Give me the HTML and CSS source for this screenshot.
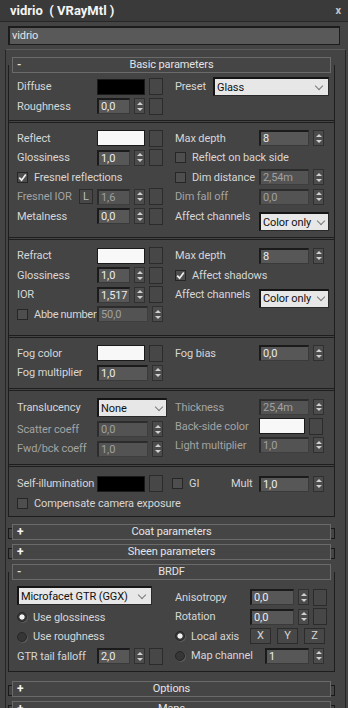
FILE: index.html
```html
<!DOCTYPE html>
<html lang="en">
<head>
    <meta charset="UTF-8">
    <title>vidrio ( VRayMtl )</title>
    <link rel="stylesheet" href="styles.css">
</head>
<body>
    <div class="titlebar">
        <span class="title">vidrio  ( VRayMtl )</span>
        <span class="close">x</span>
    </div>
    <div class="namebar"><div class="namefield">vidrio</div></div>

    <div class="panel">
        <!-- Basic parameters -->
        <section class="rollout open basic">
            <div class="rhead"><span class="sign">-</span><span>Basic parameters</span><span></span></div>

            <div class="group g1">
                <div class="col left">
                    <div class="row"><span class="lab">Diffuse</span><span class="sw black"></span><span class="map"></span></div>
                    <div class="row"><span class="lab">Roughness</span><span class="fld w33">0,0</span><span class="spin"></span><span class="map"></span></div>
                </div>
                <div class="col right">
                    <div class="row"><span class="lab w38">Preset</span><span class="dd w116">Glass</span></div>
                </div>
            </div>

            <div class="group g2">
                <div class="col left">
                    <div class="row"><span class="lab">Reflect</span><span class="sw white"></span><span class="map"></span></div>
                    <div class="row"><span class="lab">Glossiness</span><span class="fld w33">1,0</span><span class="spin"></span><span class="map"></span></div>
                    <div class="row"><span class="chk on"><svg width="9" height="9" viewBox="0 0 9 9"><path d="M1.2 4.6 L3.6 7.2 L7.8 1.4" fill="none" stroke="#f0f0f0" stroke-width="1.7"/></svg></span><span>Fresnel reflections</span></div>
                    <div class="row"><span class="lab w62 dim">Fresnel IOR</span><span class="lbtn">L</span><span class="fld w33 dim">1,6</span><span class="spin"></span><span class="map"></span></div>
                    <div class="row"><span class="lab">Metalness</span><span class="fld w33">0,0</span><span class="spin"></span><span class="map"></span></div>
                </div>
                <div class="col right">
                    <div class="row"><span class="lab">Max depth</span><span class="fld w50">8</span><span class="spin"></span></div>
                    <div class="row"><span class="chk"></span><span>Reflect on back side</span></div>
                    <div class="row"><span class="lab"><span class="chk"></span>Dim distance</span><span class="fld w50 dim">2,54m</span><span class="spin"></span></div>
                    <div class="row"><span class="lab dim">Dim fall off</span><span class="fld w50 dim">0,0</span><span class="spin"></span></div>
                    <div class="row"><span class="lab">Affect channels</span><span class="dd w70 low">Color only</span></div>
                </div>
            </div>

            <div class="group g3">
                <div class="col left">
                    <div class="row"><span class="lab">Refract</span><span class="sw white"></span><span class="map"></span></div>
                    <div class="row"><span class="lab">Glossiness</span><span class="fld w33">1,0</span><span class="spin"></span><span class="map"></span></div>
                    <div class="row"><span class="lab">IOR</span><span class="fld w33">1,517</span><span class="spin"></span><span class="map"></span></div>
                    <div class="row"><span class="lab tight"><span class="chk"></span>Abbe number</span><span class="fld w51 dim">50,0</span><span class="spin"></span></div>
                </div>
                <div class="col right">
                    <div class="row"><span class="lab">Max depth</span><span class="fld w50">8</span><span class="spin"></span></div>
                    <div class="row"><span class="chk on"><svg width="9" height="9" viewBox="0 0 9 9"><path d="M1.2 4.6 L3.6 7.2 L7.8 1.4" fill="none" stroke="#f0f0f0" stroke-width="1.7"/></svg></span><span>Affect shadows</span></div>
                    <div class="row"><span class="lab">Affect channels</span><span class="dd w70 low3">Color only</span></div>
                </div>
            </div>

            <div class="group g4">
                <div class="col left">
                    <div class="row"><span class="lab">Fog color</span><span class="sw white"></span><span class="map"></span></div>
                    <div class="row"><span class="lab">Fog multiplier</span><span class="fld w51">1,0</span><span class="spin"></span></div>
                </div>
                <div class="col right">
                    <div class="row"><span class="lab">Fog bias</span><span class="fld w50">0,0</span><span class="spin"></span></div>
                </div>
            </div>

            <div class="group g5">
                <div class="col left">
                    <div class="ddrow"><span class="lab">Translucency</span><span class="dd w70">None</span></div>
                    <div class="row"><span class="lab dim">Scatter coeff</span><span class="fld w51 dim">0,0</span><span class="spin"></span></div>
                    <div class="row"><span class="lab dim">Fwd/bck coeff</span><span class="fld w51 dim">1,0</span><span class="spin"></span></div>
                </div>
                <div class="col right">
                    <div class="row r19"><span class="lab dim">Thickness</span><span class="fld w50 dim">25,4m</span><span class="spin"></span></div>
                    <div class="row r19"><span class="lab dim">Back-side color</span><span class="sw white w46"></span><span class="map"></span></div>
                    <div class="row r19"><span class="lab dim">Light multiplier</span><span class="fld w50 dim">1,0</span><span class="spin"></span></div>
                </div>
            </div>

            <div class="group g6">
                <div class="col full">
                    <div class="row">
                        <span class="lab">Self-illumination</span><span class="sw black"></span><span class="map"></span>
                        <span class="chk gi"></span><span class="gilab">GI</span><span class="mult">Mult</span><span class="fld w50">1,0</span><span class="spin"></span>
                    </div>
                    <div class="row"><span class="chk"></span><span>Compensate camera exposure</span></div>
                </div>
            </div>
        </section>

        <section class="rollout closed"><div class="rhead"><span class="sign plus">+</span><span>Coat parameters</span><span></span></div></section>
        <section class="rollout closed"><div class="rhead"><span class="sign plus">+</span><span>Sheen parameters</span><span></span></div></section>

        <!-- BRDF -->
        <section class="rollout open brdf">
            <div class="rhead"><span class="sign">-</span><span>BRDF</span><span></span></div>
            <div class="group gb">
                <div class="col left">
                    <div class="ddrow"><span class="dd w135">Microfacet GTR (GGX)</span></div>
                    <div class="row"><span class="rad on"></span><span>Use glossiness</span></div>
                    <div class="row"><span class="rad"></span><span>Use roughness</span></div>
                    <div class="row"><span class="lab">GTR tail falloff</span><span class="fld w33">2,0</span><span class="spin"></span><span class="map"></span></div>
                </div>
                <div class="col right">
                    <div class="row"><span class="lab w75">Anisotropy</span><span class="fld w44">0,0</span><span class="spin"></span><span class="map"></span></div>
                    <div class="row"><span class="lab w75">Rotation</span><span class="fld w44">0,0</span><span class="spin"></span><span class="map"></span></div>
                    <div class="row"><span class="lab w75"><span class="rad on"></span>Local axis</span><span class="xyz">X</span><span class="xyz">Y</span><span class="xyz">Z</span></div>
                    <div class="row"><span class="lab w90"><span class="rad"></span>Map channel</span><span class="fld w44">1</span><span class="spin"></span></div>
                </div>
            </div>
        </section>

        <section class="rollout closed"><div class="rhead"><span class="sign plus">+</span><span>Options</span><span></span></div></section>
        <section class="rollout closed"><div class="rhead"><span class="sign plus">+</span><span>Maps</span><span></span></div></section>
    </div>
</body>
</html>
```

FILE: styles.css
```css
* {
    box-sizing: border-box;
}
body {
    margin: 0;
    width: 348px;
    height: 708px;
    overflow: hidden;
    background: #444444;
    color: #d6d6d6;
    font-family: Roboto, "Liberation Sans", sans-serif;
    font-size: 11px;
    letter-spacing: -0.1px;
}
.titlebar {
    height: 22px;
    background: #3a3a3a;
    border-bottom: 1px solid #262626;
    display: flex;
    align-items: center;
    justify-content: space-between;
    padding: 0 7px 0 10px;
}
.title {
    font-weight: bold;
    font-size: 13px;
    letter-spacing: 0;
    color: #f4f4f4;
    white-space: pre;
}
.close {
    font-weight: bold;
    font-size: 11px;
    color: #c4c4c4;
}
.namebar {
    padding: 4px 8px 0;
}
.namefield {
    height: 19px;
    background: #595959;
    border: 2px solid #1c1c1c;
    border-right-width: 1px;
    border-bottom-width: 1px;
    padding-left: 2px;
    line-height: 15px;
    color: #e4e4e4;
}
.panel {
    margin: 4px 2px 0 5px;
    height: 700px;
    border-left: 1px solid #262626;
    border-right: 1px solid #262626;
    border-top: 1px solid #5c5c5c;
    padding: 7px 10px 0 2px;
}

/* rollouts */
.rollout {
    position: relative;
    margin-bottom: 4px;
}
.rollout.basic {
    margin-bottom: 7px;
}
.rollout.brdf {
    margin-bottom: 9px;
}
.rollout.open::before {
    content: "";
    position: absolute;
    left: 0;
    right: 0;
    top: 8px;
    bottom: 0;
    border: 1px solid #1e1e1e;
    border-top: none;
    pointer-events: none;
}
.rollout.closed::before,
.rollout.closed::after {
    content: "";
    position: absolute;
    top: 4px;
    width: 3px;
    height: 9px;
    border: 1px solid #1a1a1a;
}
.rollout.closed::before {
    left: 0;
    border-right: none;
}
.rollout.closed::after {
    right: 0;
    border-left: none;
}
.rhead {
    height: 16px;
    margin: 0 4px;
    border: 1px solid #6a6a6a;
    background: #454545;
    display: grid;
    grid-template-columns: 1fr auto 1fr;
    align-items: center;
    line-height: 14px;
    color: #e4e4e4;
}
.sign {
    padding-left: 4px;
    font-weight: bold;
}
.sign.plus {
    color: #f4f4f4;
    font-size: 12px;
}

/* groups */
.group {
    display: flex;
    padding-left: 9px;
    border-bottom: 1px solid #1e1e1e;
}
.group + .group {
    margin-top: 1px;
    border-top: 1px solid #1e1e1e;
}
.g1 { padding-top: 4px; padding-bottom: 4px; }
.g2 { padding-top: 5.5px; padding-bottom: 11px; }
.g3 { padding-top: 6px; padding-bottom: 11px; }
.g4 { padding-top: 5.5px; padding-bottom: 5.5px; }
.g5 { padding-bottom: 5.5px; }
.g5 .left { padding-top: 7px; }
.g5 .right { padding-top: 6.5px; }
.g6 { padding-top: 7px; padding-bottom: 3px; }
.gb { padding-bottom: 5px; }
.gb .left { padding-top: 6px; }
.gb .right { padding-top: 7.5px; }

.col {
    display: flex;
    flex-direction: column;
}
.col.left {
    width: 158px;
}
.row {
    height: 19.5px;
    display: flex;
    align-items: center;
    white-space: nowrap;
}
.row.r19 {
    height: 19px;
}
.ddrow {
    display: flex;
    align-items: center;
    height: 19px;
    margin-bottom: 2.5px;
}
.lab {
    width: 80px;
    flex: none;
    display: flex;
    align-items: center;
    white-space: nowrap;
}
.lab.tight {
    letter-spacing: -0.3px;
}
.right .lab { width: 84px; }
.lab.w38 { width: 38px; }
.lab.w62 { width: 62px; }
.right .lab.w75 { width: 75px; }
.right .lab.w90 { width: 90px; }
.dim {
    color: #a3a3a3;
}

/* controls */
.sw {
    width: 48px;
    height: 16px;
    flex: none;
    border: 1px solid #1a1a1a;
}
.sw.black { background: #000000; }
.sw.white { background: #f8f8f8; }
.sw.w46 { width: 46px; }
.map {
    width: 14px;
    height: 17px;
    flex: none;
    margin-left: 4px;
    border: 1px solid #2b2b2b;
    background: #474747;
}
.fld {
    height: 16px;
    flex: none;
    background: #575757;
    border-style: solid;
    border-width: 2px 1px 1px 2px;
    border-color: #1b1b1b #3a3a3a #3a3a3a #1b1b1b;
    padding-left: 2px;
    line-height: 13px;
    color: #ececec;
    overflow: hidden;
}
.fld.dim {
    background: #535353;
    border-color: #2c2c2c #3e3e3e #3e3e3e #2c2c2c;
    color: #a0a0a0;
}
.w33 { width: 33px; }
.w44 { width: 44px; }
.w50 { width: 50px; }
.w51 { width: 51px; }
.spin {
    width: 11px;
    height: 16px;
    flex: none;
    margin-left: 4px;
    border: 1px solid #303030;
    background: #4c4c4c;
    display: flex;
    flex-direction: column;
    justify-content: space-evenly;
    align-items: center;
}
.spin::before {
    content: "";
    border-left: 3px solid transparent;
    border-right: 3px solid transparent;
    border-bottom: 3px solid #d0d0d0;
}
.spin::after {
    content: "";
    border-left: 3px solid transparent;
    border-right: 3px solid transparent;
    border-top: 3px solid #d0d0d0;
}
.dd {
    height: 19px;
    flex: none;
    display: flex;
    align-items: center;
    justify-content: space-between;
    padding: 0 4px 0 2px;
    background: #e7e7e7;
    color: #111111;
    border-style: solid;
    border-width: 2px 1px 1px 2px;
    border-color: #151515 #2a2a2a #2a2a2a #151515;
}
.dd::after {
    content: "";
    width: 5px;
    height: 5px;
    margin-bottom: 3px;
    border-right: 1px solid #7a7a7a;
    border-bottom: 1px solid #7a7a7a;
    transform: rotate(45deg);
}
.dd.w70 { width: 70px; }
.dd.w116 { width: 116px; padding-right: 6px; }
.dd.w135 { width: 135px; padding-right: 6px; }
.dd.low {
    align-self: flex-start;
    margin-top: 5.5px;
}
.dd.low3 {
    align-self: flex-start;
    margin-top: 3.5px;
}
.chk {
    width: 11px;
    height: 11px;
    flex: none;
    margin-right: 6px;
    background: #4e4e4e;
    border: 1px solid #262626;
    display: flex;
    align-items: center;
    justify-content: center;
}
.chk.gi {
    margin-left: 9px;
}
.gilab {
    width: 42px;
}
.mult {
    width: 28px;
}
.lbtn {
    width: 14px;
    height: 15px;
    flex: none;
    margin-right: 4px;
    border: 1px solid #2b2b2b;
    background: #474747;
    text-align: center;
    line-height: 13px;
    color: #bdbdbd;
}
.rad {
    width: 10px;
    height: 10px;
    flex: none;
    margin-right: 6px;
    border-radius: 50%;
    border: 1px solid #262626;
    background: #363636;
    box-shadow: 1px 1px 0 #5a5a5a;
}
.rad.on {
    background: radial-gradient(circle, #f2f2f2 0, #f2f2f2 2.2px, #3a3a3a 3px);
}
.xyz {
    width: 21px;
    height: 16px;
    flex: none;
    margin-right: 6px;
    border: 1px solid #2b2b2b;
    background: #474747;
    text-align: center;
    line-height: 14px;
}
```
